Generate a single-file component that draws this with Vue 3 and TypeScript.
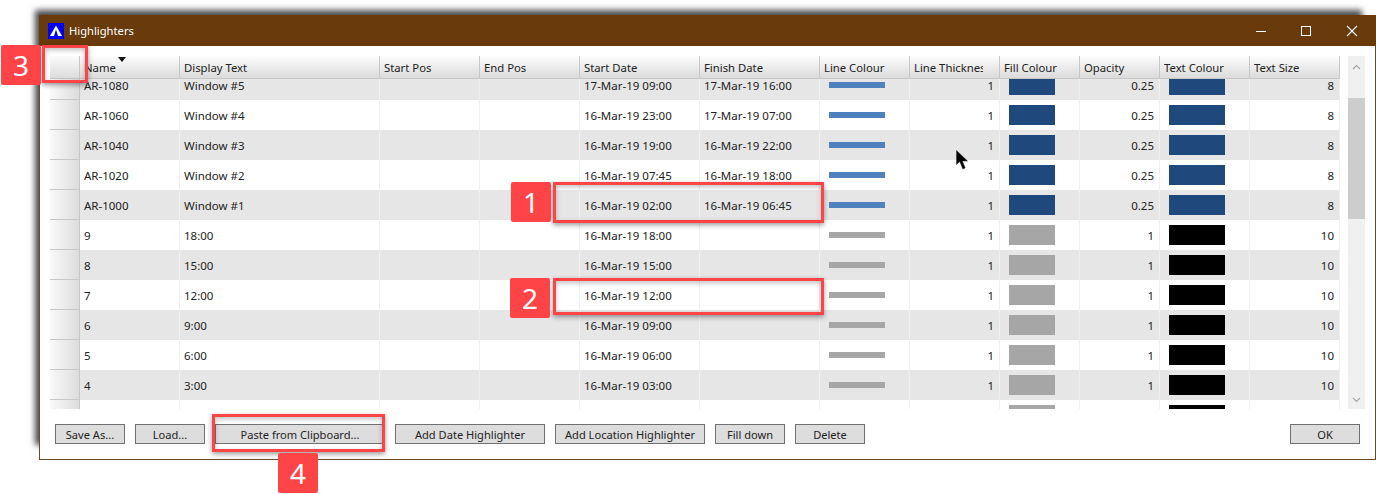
<script setup lang="ts">
interface Col { label: string; width: number }
interface Row {
  name: string; text: string; start: string; finish: string;
  blue: boolean; opacity: string; size: string;
}
const cols: Col[] = [
  { label: 'Name', width: 100 }, { label: 'Display Text', width: 200 },
  { label: 'Start Pos', width: 100 }, { label: 'End Pos', width: 100 },
  { label: 'Start Date', width: 120 }, { label: 'Finish Date', width: 120 },
  { label: 'Line Colour', width: 90 }, { label: 'Line Thickness', width: 90 },
  { label: 'Fill Colour', width: 80 }, { label: 'Opacity', width: 80 },
  { label: 'Text Colour', width: 90 }, { label: 'Text Size', width: 90 },
];
const blue = (name: string, text: string, start: string, finish: string): Row =>
  ({ name, text, start, finish, blue: true, opacity: '0.25', size: '8' });
const grey = (name: string, text: string, start: string): Row =>
  ({ name, text, start, finish: '', blue: false, opacity: '1', size: '10' });
const rows: Row[] = [
  blue('AR-1080', 'Window #5', '17-Mar-19 09:00', '17-Mar-19 16:00'),
  blue('AR-1060', 'Window #4', '16-Mar-19 23:00', '17-Mar-19 07:00'),
  blue('AR-1040', 'Window #3', '16-Mar-19 19:00', '16-Mar-19 22:00'),
  blue('AR-1020', 'Window #2', '16-Mar-19 07:45', '16-Mar-19 18:00'),
  blue('AR-1000', 'Window #1', '16-Mar-19 02:00', '16-Mar-19 06:45'),
  grey('9', '18:00', '16-Mar-19 18:00'),
  grey('8', '15:00', '16-Mar-19 15:00'),
  grey('7', '12:00', '16-Mar-19 12:00'),
  grey('6', '9:00', '16-Mar-19 09:00'),
  grey('5', '6:00', '16-Mar-19 06:00'),
  grey('4', '3:00', '16-Mar-19 03:00'),
];
const leftButtons: { label: string; width: number }[] = [
  { label: 'Save As...', width: 70 }, { label: 'Load...', width: 70 },
  { label: 'Paste from Clipboard...', width: 170 }, { label: 'Add Date Highlighter', width: 150 },
  { label: 'Add Location Highlighter', width: 150 }, { label: 'Fill down', width: 70 },
  { label: 'Delete', width: 70 },
];
</script>

<template>
  <div class="page">
    <div class="window">
      <div class="titlebar">
        <svg class="app-icon" width="16" height="16" viewBox="0 0 16 16">
          <rect width="16" height="16" fill="#0000f0" />
          <path d="M8 2.5 L14 13 H10 L8 6.5 L6 13 H2 Z" fill="#fff" />
        </svg>
        <span class="title">Highlighters</span>
        <svg class="controls" width="102" height="12" viewBox="0 0 102 12" fill="none" stroke="#fff">
          <path d="M0 6.5 H10" />
          <rect x="45.5" y="1.5" width="9" height="9" />
          <path d="M91 1 L101 11 M101 1 L91 11" stroke-width="1.1" />
        </svg>
      </div>
      <div class="content">
        <div class="grid-area">
          <div class="grid">
            <div class="grid-head">
              <div class="row-head corner"></div>
              <div v-for="c in cols" :key="c.label" class="head-cell" :style="{ width: c.width + 'px' }">
                <span class="head-label">{{ c.label }}</span>
                <span v-if="c.label === 'Name'" class="sort"></span>
              </div>
            </div>
            <div class="grid-body">
              <div class="rows">
                <div v-for="(r, i) in rows" :key="r.name" class="row" :class="{ alt: i % 2 === 0 }">
                  <div class="row-head"></div>
                  <div class="cell w100">{{ r.name }}</div>
                  <div class="cell w200">{{ r.text }}</div>
                  <div class="cell w100"></div>
                  <div class="cell w100"></div>
                  <div class="cell w120">{{ r.start }}</div>
                  <div class="cell w120">{{ r.finish }}</div>
                  <div class="cell w90 swatch-cell"><i class="line" :class="{ blue: r.blue }"></i></div>
                  <div class="cell w90 num">1</div>
                  <div class="cell w80 swatch-cell"><i class="fill" :class="{ blue: r.blue }"></i></div>
                  <div class="cell w80 num">{{ r.opacity }}</div>
                  <div class="cell w90 swatch-cell"><i class="textc" :class="{ blue: r.blue }"></i></div>
                  <div class="cell w90 num">{{ r.size }}</div>
                </div>
                <div class="row">
                  <div class="row-head"></div>
                  <div class="cell w100"></div>
                  <div class="cell w200"></div>
                  <div class="cell w100"></div>
                  <div class="cell w100"></div>
                  <div class="cell w120"></div>
                  <div class="cell w120"></div>
                  <div class="cell w90 swatch-cell"><i class="line"></i></div>
                  <div class="cell w90"></div>
                  <div class="cell w80 swatch-cell"><i class="fill"></i></div>
                  <div class="cell w80"></div>
                  <div class="cell w90 swatch-cell"><i class="textc"></i></div>
                  <div class="cell w90"></div>
                </div>
              </div>
            </div>
          </div>
          <div class="scrollbar">
            <svg class="arrow" width="9" height="6" viewBox="0 0 9 6" fill="none" stroke="#a6a6a6" stroke-width="1.2"><path d="M1 5 L4.5 1.5 L8 5" /></svg>
            <div class="thumb-space"><div class="thumb"></div></div>
            <svg class="arrow" width="9" height="6" viewBox="0 0 9 6" fill="none" stroke="#a6a6a6" stroke-width="1.2"><path d="M1 1 L4.5 4.5 L8 1" /></svg>
          </div>
        </div>
        <div class="buttons">
          <button v-for="b in leftButtons" :key="b.label" class="btn" :style="{ width: b.width + 'px' }">{{ b.label }}</button>
          <button class="btn ok">OK</button>
        </div>
      </div>
    </div>

    <svg class="cursor" width="13" height="20" viewBox="0 0 13 20">
      <path d="M0.5 0.5 V14.5 L3.8 11.5 L6.8 19 L9.2 18 L6.4 11 H11.5 Z" fill="#000" stroke="#333" stroke-width="0.5" />
    </svg>

    <div class="mark m1"></div><div class="badge b1">1</div>
    <div class="mark m2"></div><div class="badge b2">2</div>
    <div class="mark m3"></div><div class="badge b3">3</div>
    <div class="mark m4"></div><div class="badge b4">4</div>
  </div>
</template>

<style scoped>
.page { position: relative; width: 1376px; height: 494px; overflow: hidden; background: #fff; padding-top: 15px; padding-left: 39px; box-sizing: border-box; font-family: "Noto Sans", "Open Sans", sans-serif; font-size: 11.5px; color: #222; }
.window { width: 1337px; height: 445px; box-sizing: border-box; border: 1px solid #6b4a2a; border-top: 0; background: #fff; box-shadow: -9px -10px 6px -5px rgba(0,0,0,.7); display: flex; flex-direction: column; }
.titlebar { height: 31px; background: #693a0c; margin: 0 -1px; display: flex; align-items: center; padding-left: 9px; padding-right: 18px; flex: none; }
.app-icon { flex: none; }
.title { color: #fff; margin-left: 5px; font-size: 11.2px; }
.controls { margin-left: auto; }
.content { flex: 1; display: flex; flex-direction: column; padding: 10px 10px 0 10px; min-height: 0; }
.grid-area { display: flex; gap: 8px; height: 353px; flex: none; }
.grid { width: 1290px; display: flex; flex-direction: column; }
.grid-head { display: flex; height: 23px; flex: none; }
.row-head { width: 30px; flex: none; box-sizing: border-box; background: linear-gradient(90deg, #fafafa, #dcdcdc); border-right: 1px solid #c8c8c8; border-bottom: 1px solid #c8c8c8; }
.corner { background: linear-gradient(180deg, #fbfbfb, #dcdcdc); }
.head-cell { position: relative; box-sizing: border-box; background: linear-gradient(180deg, #fdfdfd, #dbdbdb); border-right: 1px solid #c8c8c8; border-bottom: 1px solid #c8c8c8; padding: 3px 0 0 4px; line-height: 18px; font-size: 11.3px; white-space: nowrap; overflow: hidden; }
.head-label { display: block; max-width: 69px; overflow: hidden; }
.sort { position: absolute; left: 38px; top: 1px; border: 4.5px solid transparent; border-top: 5px solid #111; border-bottom: 0; }
.grid-body { flex: 1; overflow: hidden; min-height: 0; }
.rows { margin-top: -9px; }
.row { display: flex; height: 30px; background: #fff; }
.row.alt { background: #e6e6e6; }
.cell { box-sizing: border-box; height: 30px; line-height: 32px; padding-left: 4px; border-right: 1px solid #f0f0f0; white-space: nowrap; overflow: hidden; }
.w80 { width: 80px; } .w90 { width: 90px; } .w100 { width: 100px; } .w120 { width: 120px; } .w200 { width: 200px; }
.num { text-align: right; padding: 0 5px 0 0; }
.swatch-cell { padding: 0 0 0 9px; display: flex; align-items: center; }
.line { width: 56px; height: 6px; background: #a6a6a6; display: block; }
.line.blue { background: #4f81bd; }
.fill { width: 46px; height: 20px; background: #a6a6a6; display: block; }
.fill.blue { background: #1f497d; }
.textc { width: 56px; height: 20px; background: #000; display: block; }
.textc.blue { background: #1f497d; }
.scrollbar { width: 17px; background: #f0f0f0; display: flex; flex-direction: column; align-items: center; padding: 8px 0 6px; box-sizing: border-box; }
.arrow { flex: none; }
.thumb-space { flex: 1; width: 100%; padding-top: 28px; }
.thumb { height: 121px; background: #cdcdcd; }
.buttons { display: flex; gap: 10px; margin-top: 15px; padding-left: 5px; padding-right: 5px; }
.btn { height: 20px; box-sizing: border-box; border: 1px solid #707070; background: #dddddd; font: inherit; font-size: 11.1px; color: #222; padding: 1px 0 0; line-height: 17px; white-space: nowrap; }
.ok { width: 70px; margin-left: auto; }
.cursor { position: absolute; left: 956px; top: 150px; }
.mark { position: absolute; box-sizing: border-box; border: 3px solid #ff4447; box-shadow: 0 2px 5px rgba(0,0,0,.4), inset 0 2px 5px rgba(0,0,0,.25); }
.m1 { left: 553px; top: 182px; width: 271px; height: 41px; }
.m2 { left: 553px; top: 278px; width: 271px; height: 37px; }
.m3 { left: 42px; top: 45px; width: 46px; height: 38px; }
.m4 { left: 212px; top: 414px; width: 173px; height: 38px; }
.badge { position: absolute; width: 40px; height: 40px; background: #ff4447; color: #fff; border-radius: 2px; font-family: "Noto Sans", sans-serif; font-size: 28px; line-height: 40px; text-align: center; }
.b1 { left: 511px; top: 182px; }
.b2 { left: 510px; top: 278px; }
.b3 { left: 1px; top: 45px; }
.b4 { left: 278px; top: 453px; }
</style>
